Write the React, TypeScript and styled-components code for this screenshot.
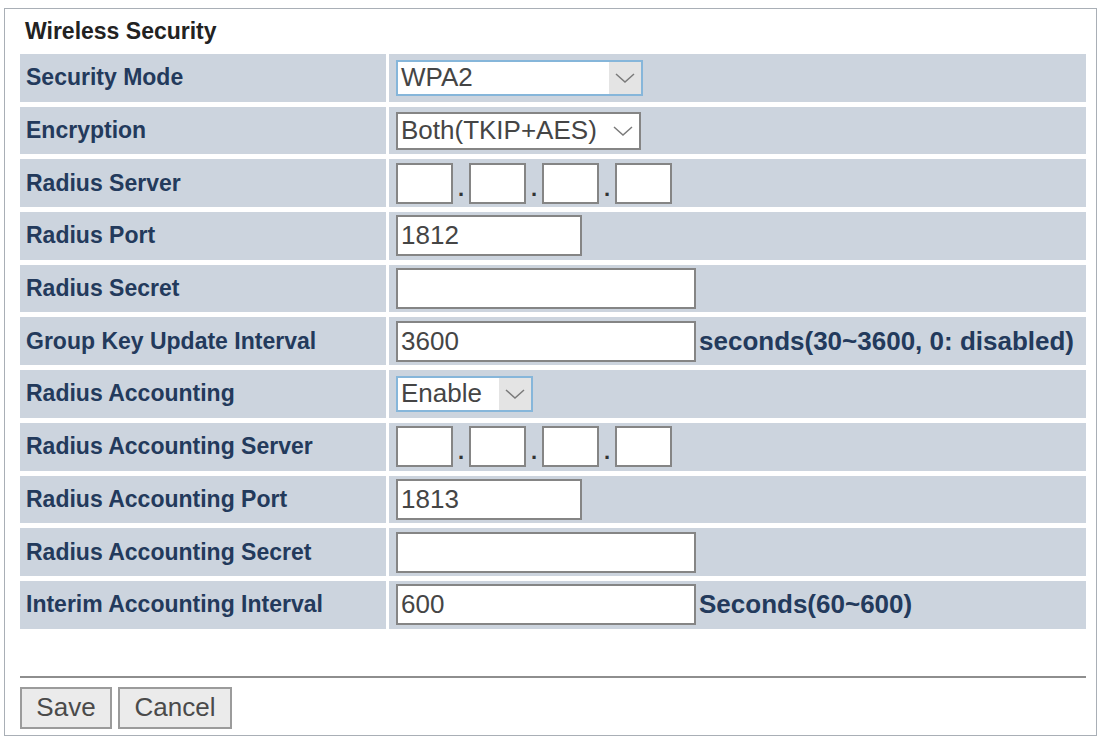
import React from 'react'
import styled, { createGlobalStyle } from 'styled-components'

const GlobalStyle = createGlobalStyle`
  html, body {
    margin: 0;
    padding: 0;
    background: #ffffff;
  }
  body {
    font-family: 'Liberation Sans', Arial, sans-serif;
  }
`

const Frame = styled.div`
  box-sizing: border-box;
  margin: 8px 1px 0 4px;
  height: 728px;
  border: 1px solid #a9afb6;
  padding: 0 10px 0 15px;
  display: flex;
  flex-direction: column;
`

const Title = styled.div`
  height: 45px;
  line-height: 45px;
  padding-left: 5px;
  font-size: 23px;
  font-weight: bold;
  color: #222222;
`

const Table = styled.div`
  display: grid;
  grid-template-columns: 366px 1fr;
  grid-auto-rows: 47.7px;
  column-gap: 3px;
  row-gap: 5px;
`

const Label = styled.div`
  display: flex;
  align-items: center;
  padding-left: 6px;
  background: #ccd4de;
  font-size: 23px;
  font-weight: bold;
  color: #233a5c;
`

const Value = styled.div`
  display: flex;
  align-items: center;
  padding-left: 7px;
  background: #ccd4de;
`

const TextBox = styled.div<{ $w: number }>`
  box-sizing: border-box;
  width: ${p => p.$w}px;
  height: 41px;
  border: 2px solid #858585;
  background: #ffffff;
  padding-left: 3px;
  font-size: 26px;
  line-height: 37px;
  color: #454545;
`

const Hint = styled.span`
  margin-left: 3px;
  font-size: 26px;
  font-weight: bold;
  color: #233a5c;
  white-space: nowrap;
`

const SelectBox = styled.div<{ $w: number; $focus?: boolean }>`
  box-sizing: border-box;
  width: ${p => p.$w}px;
  height: ${p => (p.$focus ? 36 : 38)}px;
  display: flex;
  align-items: stretch;
  border: 2px solid ${p => (p.$focus ? '#86b6da' : '#858585')};
  background: #ffffff;
  font-size: 26px;
  color: #454545;
`

const SelectText = styled.div`
  flex: 1;
  display: flex;
  align-items: center;
  padding-left: 3px;
  white-space: nowrap;
`

const Arrow = styled.div<{ $shade?: boolean }>`
  width: 32px;
  display: flex;
  align-items: center;
  justify-content: center;
  background: ${p => (p.$shade ? '#e4e4e4' : 'transparent')};
`

const IpGroup = styled.div`
  display: flex;
  align-items: flex-end;
`

const IpDot = styled.span`
  width: 16px;
  text-align: center;
  font-size: 22px;
  font-weight: bold;
  line-height: 30px;
  color: #333333;
`

const Rule = styled.div`
  margin-top: 47px;
  height: 2px;
  background: #8e8e8e;
`

const Buttons = styled.div`
  display: flex;
  gap: 6px;
  margin-top: 9px;
`

const Button = styled.button<{ $w: number }>`
  box-sizing: border-box;
  width: ${p => p.$w}px;
  height: 42px;
  padding: 0;
  border: 2px solid #9b9b9b;
  background: #ebebeb;
  font-family: 'Liberation Sans', Arial, sans-serif;
  font-size: 26px;
  color: #4a4a4a;
`

function Chevron() {
  return (
    <svg width="20" height="10" viewBox="0 0 20 10">
      <polyline points="1,1 10,9 19,1" fill="none" stroke="#7a7a7a" strokeWidth="1.5" />
    </svg>
  )
}

function Select({ value, width, focus }: { value: string; width: number; focus?: boolean }) {
  return (
    <SelectBox $w={width} $focus={focus}>
      <SelectText>{value}</SelectText>
      <Arrow $shade={focus}>
        <Chevron />
      </Arrow>
    </SelectBox>
  )
}

function IpInput() {
  return (
    <IpGroup>
      <TextBox $w={57} />
      <IpDot>.</IpDot>
      <TextBox $w={57} />
      <IpDot>.</IpDot>
      <TextBox $w={57} />
      <IpDot>.</IpDot>
      <TextBox $w={57} />
    </IpGroup>
  )
}

export default function App() {
  return (
    <>
      <GlobalStyle />
      <Frame>
        <Title>Wireless Security</Title>
        <Table>
          <Label>Security Mode</Label>
          <Value>
            <Select value="WPA2" width={247} focus />
          </Value>

          <Label>Encryption</Label>
          <Value>
            <Select value="Both(TKIP+AES)" width={245} />
          </Value>

          <Label>Radius Server</Label>
          <Value>
            <IpInput />
          </Value>

          <Label>Radius Port</Label>
          <Value>
            <TextBox $w={186}>1812</TextBox>
          </Value>

          <Label>Radius Secret</Label>
          <Value>
            <TextBox $w={300} />
          </Value>

          <Label>Group Key Update Interval</Label>
          <Value>
            <TextBox $w={300}>3600</TextBox>
            <Hint>seconds(30~3600, 0: disabled)</Hint>
          </Value>

          <Label>Radius Accounting</Label>
          <Value>
            <Select value="Enable" width={137} focus />
          </Value>

          <Label>Radius Accounting Server</Label>
          <Value>
            <IpInput />
          </Value>

          <Label>Radius Accounting Port</Label>
          <Value>
            <TextBox $w={186}>1813</TextBox>
          </Value>

          <Label>Radius Accounting Secret</Label>
          <Value>
            <TextBox $w={300} />
          </Value>

          <Label>Interim Accounting Interval</Label>
          <Value>
            <TextBox $w={300}>600</TextBox>
            <Hint>Seconds(60~600)</Hint>
          </Value>
        </Table>
        <Rule />
        <Buttons>
          <Button $w={92}>Save</Button>
          <Button $w={114}>Cancel</Button>
        </Buttons>
      </Frame>
    </>
  )
}
